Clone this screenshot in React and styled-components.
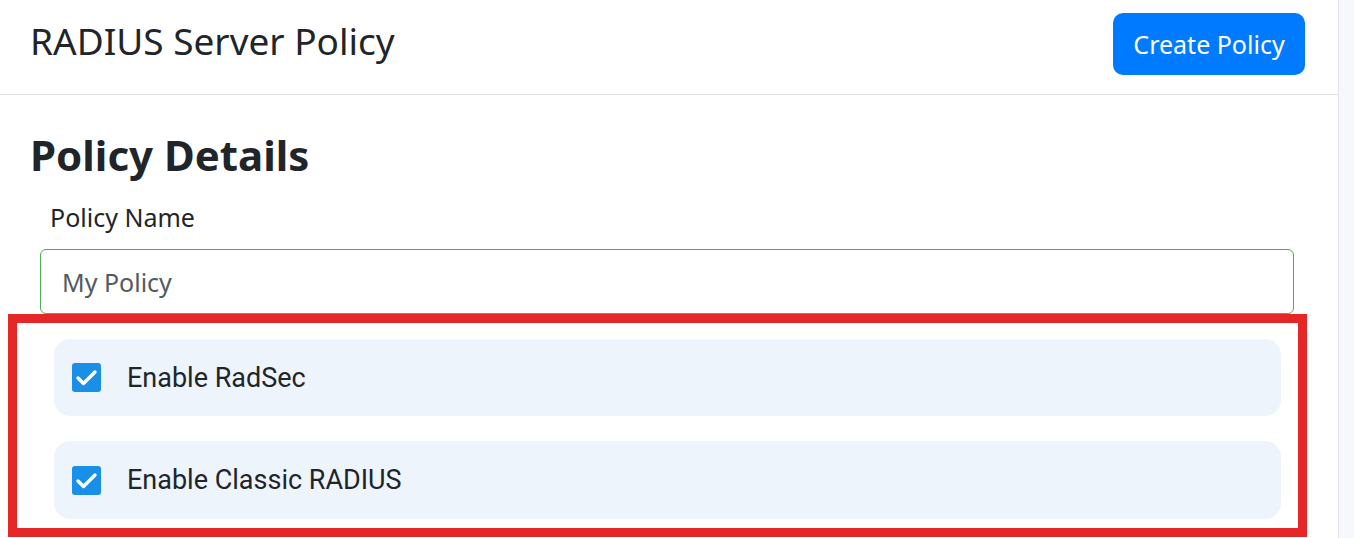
import React from "react";
import styled, { createGlobalStyle } from "styled-components";

const GlobalStyle = createGlobalStyle`
  html, body { margin: 0; padding: 0; background: #ffffff; }
  * { box-sizing: border-box; }
`;

const Page = styled.div`
  display: flex;
  width: 1354px;
  height: 538px;
  overflow: hidden;
  font-family: "Noto Sans", "Open Sans", sans-serif;
  color: #212529;
`;

const Main = styled.div`
  width: 1339px;
  border-right: 1px solid #e3e4e8;
  display: flex;
  flex-direction: column;
`;

const Strip = styled.div`
  flex: 1;
  background: #f7f8fb;
`;

const Header = styled.header`
  height: 95px;
  border-bottom: 1px solid #dfe1e4;
  display: flex;
  justify-content: space-between;
  align-items: flex-start;
  padding: 13px 33px 0 30px;
`;

const Title = styled.h1`
  margin: 5px 0 0 0;
  font-size: 37px;
  line-height: 46px;
  font-weight: 400;
  color: #212529;
`;

const PrimaryButton = styled.button`
  width: 192px;
  height: 62px;
  border: none;
  border-radius: 10px;
  background: #007bff;
  color: #ffffff;
  font-family: "Noto Sans", sans-serif;
  font-size: 25px;
  cursor: pointer;
`;

const Content = styled.section`
  display: flex;
  flex-direction: column;
`;

const SectionTitle = styled.h2`
  margin: 33px 0 0 30px;
  font-size: 42px;
  line-height: 54px;
  font-weight: 700;
  color: #212529;
`;

const FieldLabel = styled.label`
  margin: 19px 0 0 50px;
  font-size: 25px;
  line-height: 32px;
  color: #212529;
`;

const TextInput = styled.input`
  margin: 16px 0 0 40px;
  width: 1254px;
  height: 65px;
  border: 1px solid #4caf50;
  border-radius: 6px;
  padding: 0 21px;
  font-family: "Noto Sans", sans-serif;
  font-size: 25px;
  color: #555a60;
  outline: none;
`;

const Highlight = styled.div`
  margin: 0 0 0 8px;
  width: 1299px;
  border: 9px solid #e52727;
  padding: 16px 17px 9px 37px;
  display: flex;
  flex-direction: column;
  gap: 25px;
`;

const OptionRow = styled.label`
  height: ${(p) => p.$h}px;
  background: #edf4fc;
  border-radius: 16px;
  display: flex;
  align-items: center;
  padding-left: 18px;
  gap: 26px;
  font-family: Roboto, "Noto Sans", sans-serif;
  font-size: 27px;
  color: #212529;
`;

const Box = styled.span`
  width: 29px;
  height: 29px;
  border-radius: 3px;
  background: #1a8fe8;
  display: flex;
  align-items: center;
  justify-content: center;
  flex-shrink: 0;
`;

const Check = () => (
  <Box>
    <svg width="29" height="29" viewBox="0 0 29 29">
      <path d="M6 15 L11.5 20.5 L23 9" fill="none" stroke="#fff" strokeWidth="3.4" strokeLinecap="round" strokeLinejoin="round" />
    </svg>
  </Box>
);

export default function App() {
  return (
    <>
      <GlobalStyle />
      <Page>
        <Main>
          <Header>
            <Title>RADIUS Server Policy</Title>
            <PrimaryButton>Create Policy</PrimaryButton>
          </Header>
          <Content>
            <SectionTitle>Policy Details</SectionTitle>
            <FieldLabel>Policy Name</FieldLabel>
            <TextInput defaultValue="My Policy" />
            <Highlight>
              <OptionRow $h={77}>
                <Check />
                Enable RadSec
              </OptionRow>
              <OptionRow $h={78}>
                <Check />
                Enable Classic RADIUS
              </OptionRow>
            </Highlight>
          </Content>
        </Main>
        <Strip />
      </Page>
    </>
  );
}
